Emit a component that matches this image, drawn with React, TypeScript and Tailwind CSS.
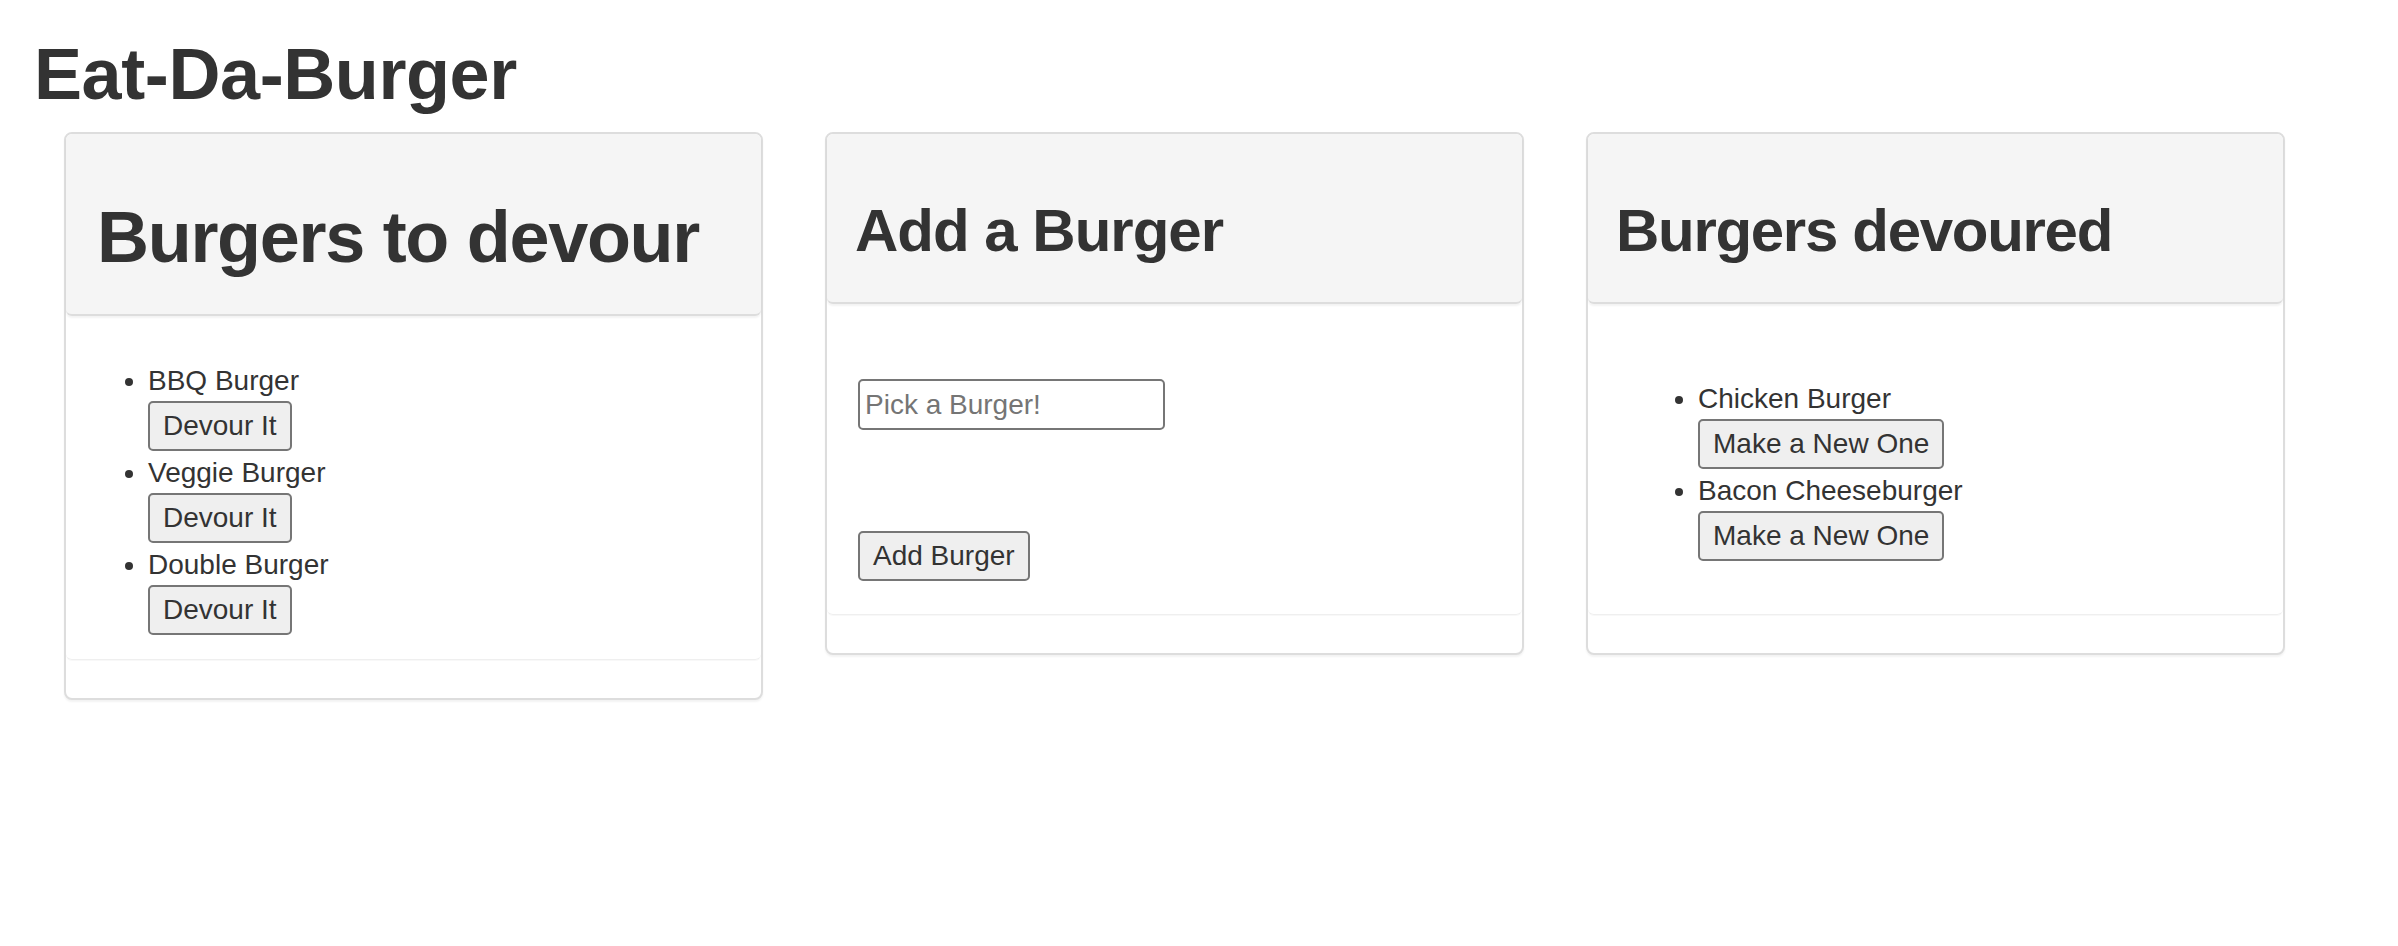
import React from 'react';

const toDevour = ['BBQ Burger', 'Veggie Burger', 'Double Burger'];
const devoured = ['Chicken Burger', 'Bacon Cheeseburger'];

const btn =
    'h-[50px] px-[13px] border-2 border-[#767676] rounded-[5px] bg-[#efefef] text-[28px] leading-none text-[#333]';

const Panel: React.FC<{heading: React.ReactNode; children: React.ReactNode}> = ({heading, children}) => (
    <div className="w-[699px] rounded-[8px] border-2 border-[#dddddd] bg-white shadow-[0_2px_2px_rgba(0,0,0,0.05)]">
        <div className="rounded-[6px] border-b-2 border-[#dddddd] bg-[#f5f5f5] px-[28px] shadow-[0_2px_2px_rgba(0,0,0,0.05)]">
            {heading}
        </div>
        <div className="rounded-b-[6px] border-b border-[#efefef] shadow-[0_1px_1px_rgba(0,0,0,0.03)]">
            {children}
        </div>
        <div className="h-[38px]"/>
    </div>
);

const BurgerList: React.FC<{items: string[]; label: string; indent: string}> = ({items, label, indent}) => (
    <ul className={`list-disc ${indent}`}>
        {items.map((name) => (
            <li key={name} className="mb-[1px]">
                <div className="h-[40px] leading-[40px]">{name}</div>
                <button className={btn}>{label}</button>
            </li>
        ))}
    </ul>
);

export default function App() {
    return (
        <div
            className="min-h-screen bg-white text-[#333] text-[28px]"
            style={{fontFamily: '"Liberation Sans", Arial, sans-serif'}}
        >
            <h1 className="pl-[34px] pt-[35px] text-[72px] leading-[79px] font-bold tracking-[-0.4px]">
                Eat-Da-Burger
            </h1>
            <div className="mt-[18px] flex items-start gap-[62px] pl-[64px]">
                <Panel
                    heading={
                        <h1 className="pl-[3px] pt-[64px] pb-[37px] text-[72px] leading-[79px] font-bold tracking-[-1.3px]">
                            Burgers to devour
                        </h1>
                    }
                >
                    <div className="pt-[44px] pb-[23px]">
                        <BurgerList items={toDevour} label="Devour It" indent="pl-[82px]"/>
                    </div>
                </Panel>
                <Panel
                    heading={
                        <h2 className="pt-[64px] pb-[38px] text-[60px] leading-[66px] font-bold tracking-[-1px]">
                            Add a Burger
                        </h2>
                    }
                >
                    <div className="flex flex-col items-start px-[31px] pt-[75px] pb-[33px]">
                        <input
                            type="text"
                            placeholder="Pick a Burger!"
                            className="h-[51px] w-[307px] rounded-[5px] border-2 border-[#767676] bg-white px-[5px] text-[28px] outline-none placeholder:text-[#757575]"
                        />
                        <button className={`${btn} mt-[101px]`}>Add Burger</button>
                    </div>
                </Panel>
                <Panel
                    heading={
                        <h2 className="pt-[64px] pb-[38px] text-[60px] leading-[66px] font-bold tracking-[-1.3px]">
                            Burgers devoured
                        </h2>
                    }
                >
                    <div className="pt-[74px] pb-[52px]">
                        <BurgerList items={devoured} label="Make a New One" indent="pl-[110px]"/>
                    </div>
                </Panel>
            </div>
        </div>
    );
}
